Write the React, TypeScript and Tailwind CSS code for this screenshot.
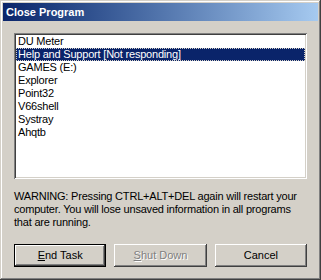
import React, { useState } from "react";

const programs: string[] = [
  "DU Meter",
  "Help and Support [Not responding]",
  "GAMES (E:)",
  "Explorer",
  "Point32",
  "V66shell",
  "Systray",
  "Ahqtb",
];

const bevelOut =
  "shadow-[inset_-1px_-1px_#404040,inset_1px_1px_#ffffff,inset_-2px_-2px_#808080,inset_2px_2px_#d4d0c8]";

const App: React.FC = () => {
  const [selected, setSelected] = useState<number>(1);

  return (
    <div className="w-[321px] h-[280px] bg-[#d4d0c8] font-['Liberation_Sans',Arial,sans-serif] text-[11px] text-black select-none">
      <div className="w-full h-full p-[3px] shadow-[inset_-1px_-1px_#404040,inset_1px_1px_#d4d0c8,inset_-2px_-2px_#808080,inset_2px_2px_#ffffff] flex flex-col">
        <div className="h-[18px] bg-gradient-to-r from-[#0a246a] to-[#a6caf0] flex items-center pl-[3px]">
          <span className="text-white font-bold text-[11px] leading-none">Close Program</span>
        </div>

        <div className="flex flex-col px-[11px] pt-[12px]">
          <div className="w-[293px] h-[146px] bg-white p-[2px] shadow-[inset_1px_1px_#808080,inset_-1px_-1px_#ffffff,inset_2px_2px_#404040,inset_-2px_-2px_#d4d0c8]">
            <ul className="flex flex-col tracking-[-0.2px]">
              {programs.map((p, i) => (
                <li
                  key={p}
                  onClick={() => setSelected(i)}
                  className={`h-[13px] leading-[13px] pl-[2px] whitespace-nowrap ${
                    selected === i
                      ? "bg-[#0a246a] text-white outline outline-1 outline-dotted outline-offset-[-1px] outline-[#d4d0c8]"
                      : ""
                  }`}
                >
                  {p}
                </li>
              ))}
            </ul>
          </div>

          <p className="mt-[11px] leading-[13px] w-[294px] tracking-[-0.2px]">
            WARNING: Pressing CTRL+ALT+DEL again will restart your computer. You will lose unsaved information in all programs that are running.
          </p>

          <div className="flex gap-[8px] mt-[15px]">
            <button className={`w-[93px] h-[23px] border border-black ${bevelOut} flex items-center justify-center`}>
              <span>
                <span className="underline">E</span>nd Task
              </span>
            </button>
            <button
              disabled
              className={`w-[93px] h-[23px] ${bevelOut} flex items-center justify-center text-[#808080] [text-shadow:1px_1px_#ffffff]`}
            >
              <span>
                <span className="underline">S</span>hut Down
              </span>
            </button>
            <button className={`w-[93px] h-[23px] ${bevelOut} flex items-center justify-center`}>
              Cancel
            </button>
          </div>
        </div>
      </div>
    </div>
  );
};

export default App;
